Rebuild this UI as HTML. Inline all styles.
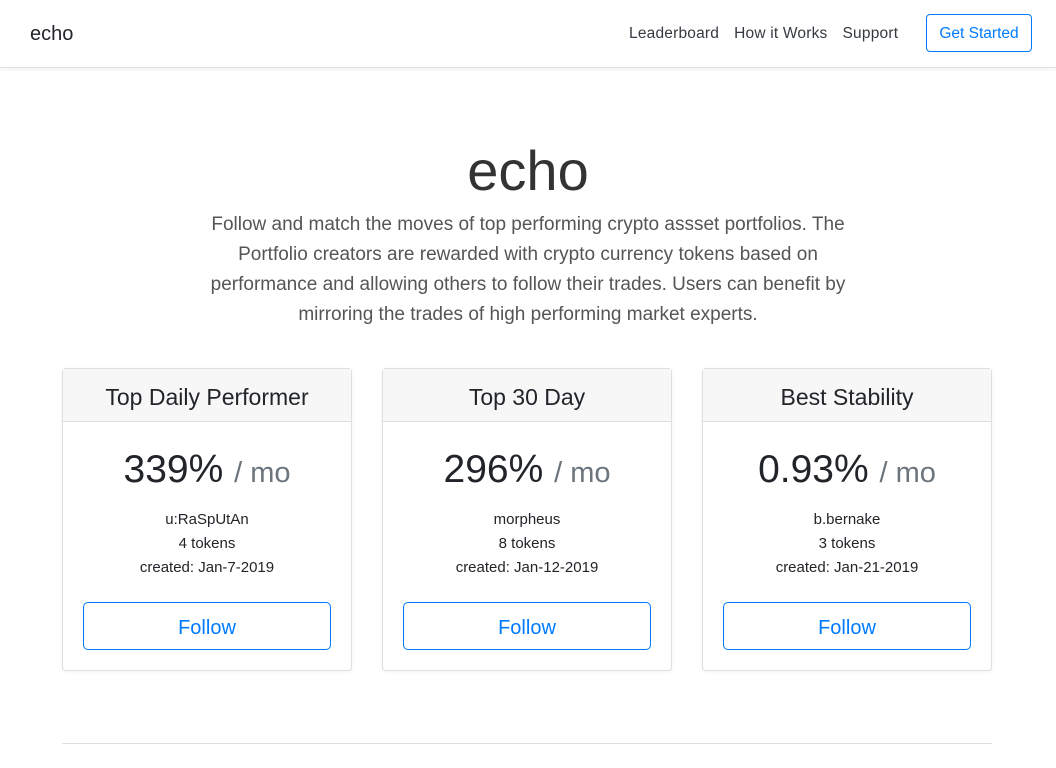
<!DOCTYPE html>
<html><head><meta charset="utf-8"><style>
*{box-sizing:border-box;margin:0;padding:0}
body{width:1056px;height:768px;overflow:hidden;font-family:"Liberation Sans",sans-serif;color:#212529;background:#fff}
.nav{height:68px;background:#fff;border-bottom:1px solid #dee2e6;box-shadow:0 1px 4px rgba(0,0,0,.08);position:relative}
.brand{position:absolute;left:30px;top:23px;font-size:20px;color:#212529}
.links{position:absolute;left:629px;top:25px;font-size:15.5px;color:#343a40;letter-spacing:.2px}
.links span{margin-right:15px}
.gs{position:absolute;left:926px;top:14px;width:106px;height:38px;border:1px solid #007bff;border-radius:4px;color:#007bff;font-size:15.5px;text-align:center;line-height:38px}
h1{position:absolute;top:138px;width:100%;text-align:center;font-size:56px;font-weight:300;color:#333}
.lead{position:absolute;top:210px;left:203px;width:650px;text-align:center;font-size:19px;line-height:30px;font-weight:300;color:#555}
.card{position:absolute;top:368px;width:290px;height:303px;border:1px solid #dfdfdf;border-radius:4px;box-shadow:0 1px 3px rgba(0,0,0,.06);text-align:center}
.hd{height:53px;background:#f7f7f7;border-bottom:1px solid #dfdfdf;font-size:23px;line-height:56px}
.price{margin-top:24px;font-size:39px;line-height:48px}
.price small{font-size:29px;color:#6c757d}
.ul{margin-top:11px;font-size:15px;line-height:24px}
.btn{position:absolute;left:20px;right:20px;top:233px;height:48px;border:1px solid #007bff;border-radius:5px;color:#007bff;font-size:20px;line-height:50px}
hr{position:absolute;top:743px;left:62px;width:930px;border:0;border-top:1px solid #e0e0e0}
</style></head><body>
<div class="nav"><div class="brand">echo</div><div class="links"><span>Leaderboard</span><span>How it Works</span><span>Support</span></div><div class="gs">Get Started</div></div>
<h1>echo</h1>
<div class="lead">Follow and match the moves of top performing crypto assset portfolios. The Portfolio creators are rewarded with crypto currency tokens based on performance and allowing others to follow their trades. Users can benefit by mirroring the trades of high performing market experts.</div>
<div class="card" style="left:62px"><div class="hd">Top Daily Performer</div><div class="price">339% <small>/ mo</small></div><div class="ul">u:RaSpUtAn<br>4 tokens<br>created: Jan-7-2019</div><div class="btn">Follow</div></div>
<div class="card" style="left:382px"><div class="hd">Top 30 Day</div><div class="price">296% <small>/ mo</small></div><div class="ul">morpheus<br>8 tokens<br>created: Jan-12-2019</div><div class="btn">Follow</div></div>
<div class="card" style="left:702px"><div class="hd">Best Stability</div><div class="price">0.93% <small>/ mo</small></div><div class="ul">b.bernake<br>3 tokens<br>created: Jan-21-2019</div><div class="btn">Follow</div></div>
<hr>
</body></html>
